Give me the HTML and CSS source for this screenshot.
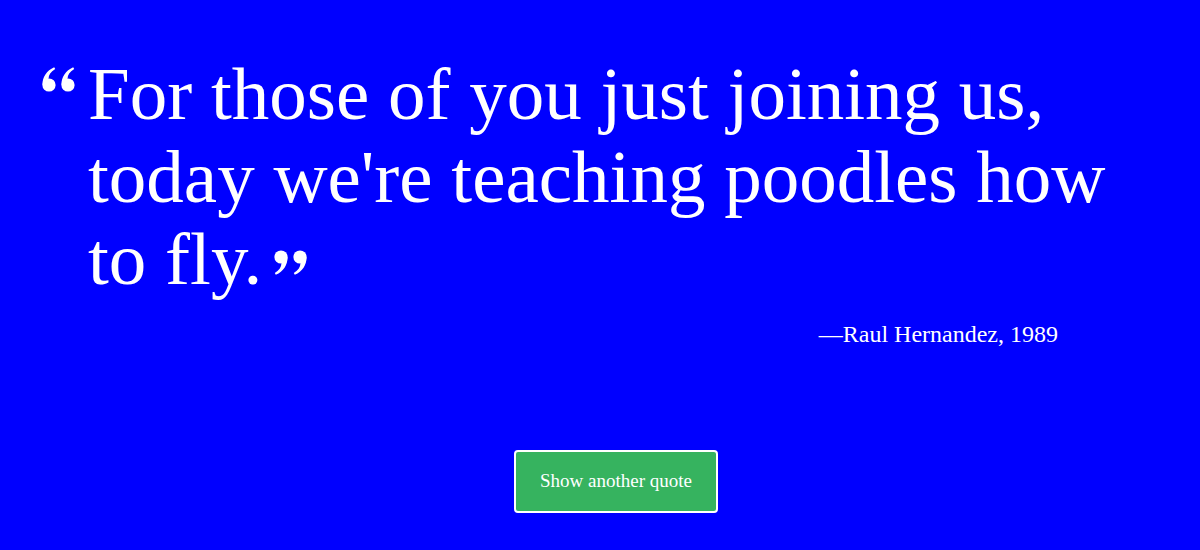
FILE: index.html
```html
<!DOCTYPE html>
<html>
<head>
<meta charset="utf-8">
<link rel="stylesheet" href="styles.css">
</head>
<body>
<main class="page">
  <section class="quote-box">
    <div class="quote-row">
      <svg class="qmark open" viewBox="0 0 33 25" aria-hidden="true">
        <g fill="#fff">
          <circle cx="7" cy="18" r="6.6"/>
          <path d="M0.4,18 C0.4,10 4.5,3.5 12.2,0.2 L13.2,2 C8.6,4.8 6.6,8 6.6,11.5 L3,15.5 Z"/>
          <circle cx="26" cy="18" r="6.6"/>
          <path d="M19.4,18 C19.4,10 23.5,3.5 31.2,0.2 L32.2,2 C27.6,4.8 25.6,8 25.6,11.5 L22,15.5 Z"/>
        </g>
      </svg>
      <blockquote class="quote-text">For those of you just joining us, today we're teaching poodles how to fly.<svg class="qmark close" viewBox="0 0 33 25" aria-hidden="true">
        <g fill="#fff" transform="rotate(180 16.5 12.5)">
          <circle cx="7" cy="18" r="6.6"/>
          <path d="M0.4,18 C0.4,10 4.5,3.5 12.2,0.2 L13.2,2 C8.6,4.8 6.6,8 6.6,11.5 L3,15.5 Z"/>
          <circle cx="26" cy="18" r="6.6"/>
          <path d="M19.4,18 C19.4,10 23.5,3.5 31.2,0.2 L32.2,2 C27.6,4.8 25.6,8 25.6,11.5 L22,15.5 Z"/>
        </g>
      </svg></blockquote>
    </div>
    <p class="author">&mdash;Raul Hernandez, 1989</p>
  </section>
  <div class="actions">
    <button class="btn">Show another quote</button>
  </div>
</main>
</body>
</html>
```

FILE: styles.css
```css
html, body {
  margin: 0;
  padding: 0;
  background: #0000ff;
  color: #ffffff;
  height: 100%;
}
.page {
  font-family: "Liberation Serif", serif;
  padding: 53px 42px 0 42px;
}
.quote-row {
  display: flex;
  align-items: flex-start;
}
.qmark {
  width: 33px;
  height: 25px;
  display: block;
}
.qmark.open {
  flex: none;
  margin: 14px 13px 0 0;
}
.qmark.close {
  display: inline-block;
  margin-left: 12px;
  vertical-align: 9px;
}
.quote-text {
  margin: 0;
  font-size: 75px;
  line-height: 82.5px;
  max-width: 1060px;
}
.author {
  margin: 20px 0 0 0;
  width: 1016px;
  text-align: right;
  font-size: 24px;
}
.actions {
  display: flex;
  justify-content: center;
  padding-left: 32px;
  margin-top: 102px;
}
.btn {
  font-family: "Liberation Serif", serif;
  font-size: 19px;
  color: #fff;
  background: #36b35f;
  border: 2px solid #ffffff;
  border-radius: 4px;
  width: 204px;
  height: 63px;
}
```
